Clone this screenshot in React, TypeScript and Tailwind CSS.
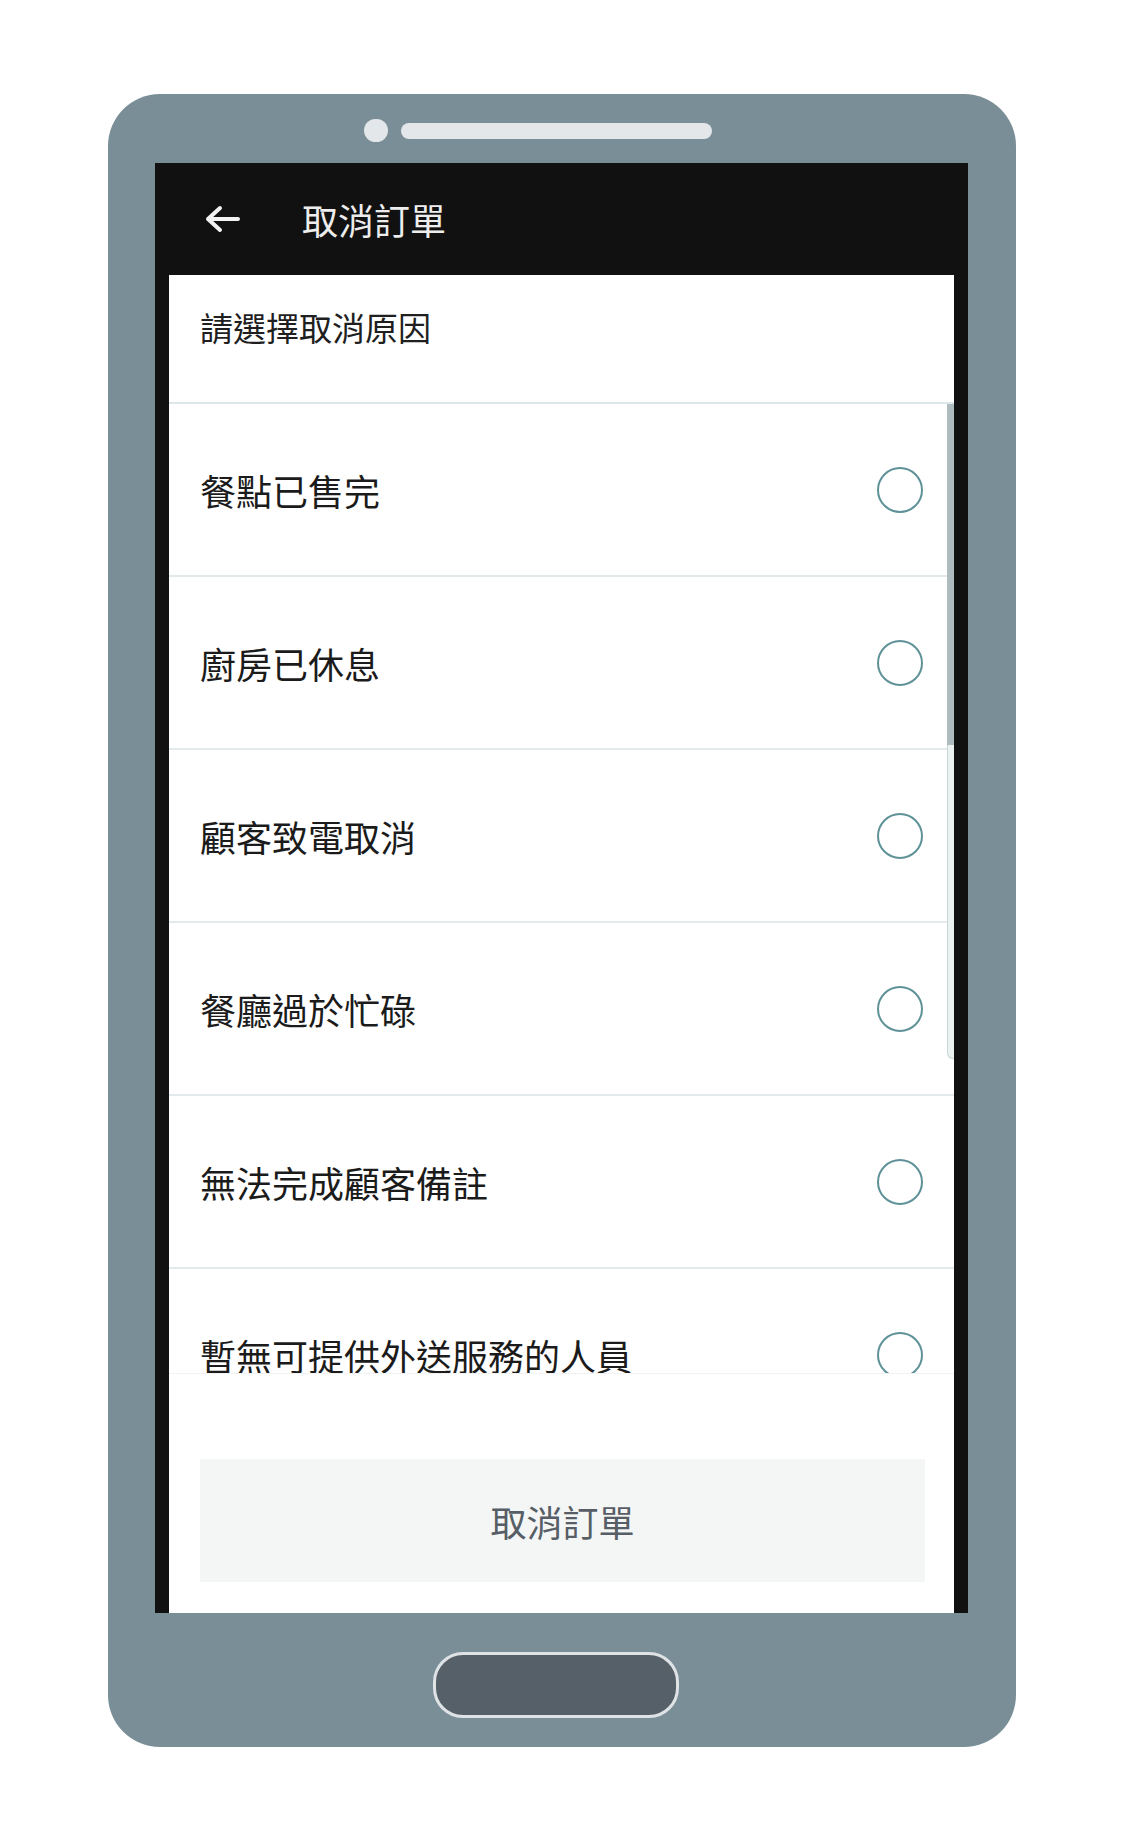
const reasons = [
  "餐點已售完",
  "廚房已休息",
  "顧客致電取消",
  "餐廳過於忙碌",
  "無法完成顧客備註",
  "暫無可提供外送服務的人員",
];

const cjk = { fontFamily: '"Noto Sans CJK TC", "Noto Sans", sans-serif' };

function BackArrow() {
  return (
    <svg width="36" height="28" viewBox="0 0 36 28" fill="none">
      <path
        d="M34 14H4M16 3L4 14L16 25"
        stroke="#f2f2f2"
        strokeWidth="4"
        strokeLinecap="round"
        strokeLinejoin="round"
      />
    </svg>
  );
}

export default function App() {
  return (
    <div className="w-full h-[1841px] bg-white flex justify-center pt-[94px]" style={cjk}>
      <div className="w-[908px] h-[1653px] rounded-[52px] bg-[#7a8e97] flex flex-col pl-[47px] pr-[48px]">
        {/* camera + speaker */}
        <div className="h-[69px] flex items-start pt-[25px] pl-[209px] gap-[13px]">
          <div className="w-[24px] h-[23px] rounded-full bg-[#e3e7ea]" />
          <div className="w-[311px] h-[16px] mt-[4px] rounded-full bg-[#e3e7ea]" />
        </div>

        {/* screen */}
        <div className="h-[1450px] bg-[#111111] flex flex-col">
          <div className="h-[112px] flex items-center pl-[49px]">
            <BackArrow />
            <span className="ml-[62px] text-[36px] leading-none text-[#ededed]">取消訂單</span>
          </div>

          <div className="flex-1 mx-[14px] bg-white flex flex-col">
            <div className="h-[129px] border-b-2 border-[#dde7e9] pl-[31px] pt-[36px]">
              <span className="text-[33px] leading-none text-[#1f1f1f]">請選擇取消原因</span>
            </div>

            <div className="h-[969px] relative overflow-hidden">
              {reasons.map((r) => (
                <div
                  key={r}
                  className="h-[173px] shrink-0 border-b-2 border-[#e3eaec] flex items-center justify-between pl-[31px] pr-[31px]"
                >
                  <span className="text-[36px] leading-none text-[#1b1b1b]">{r}</span>
                  <div className="w-[46px] h-[46px] rounded-full border-2 border-[#5f9298]" />
                </div>
              ))}

              {/* scroll indicator */}
              <div className="absolute right-0 top-0 w-[7px] flex flex-col">
                <div className="h-[341px] bg-[#aebcbf]" />
                <div className="h-[314px] bg-[#ecf1f1] border-l border-b border-[#c9d6d8] rounded-bl-[6px]" />
              </div>
            </div>

            <div className="flex-1 border-t border-[#f1f2f2] pt-[85px] pl-[31px] pr-[29px]">
              <div className="h-[123px] bg-[#f4f5f5] flex items-center justify-center">
                <span className="text-[36px] leading-none text-[#575e66]">取消訂單</span>
              </div>
            </div>
          </div>
        </div>

        {/* home button */}
        <div className="flex-1 flex justify-center items-start pt-[39px] pr-[11px]">
          <div className="w-[246px] h-[66px] rounded-[30px] bg-[#566069] border-[3px] border-[#e0e3e6]" />
        </div>
      </div>
    </div>
  );
}
